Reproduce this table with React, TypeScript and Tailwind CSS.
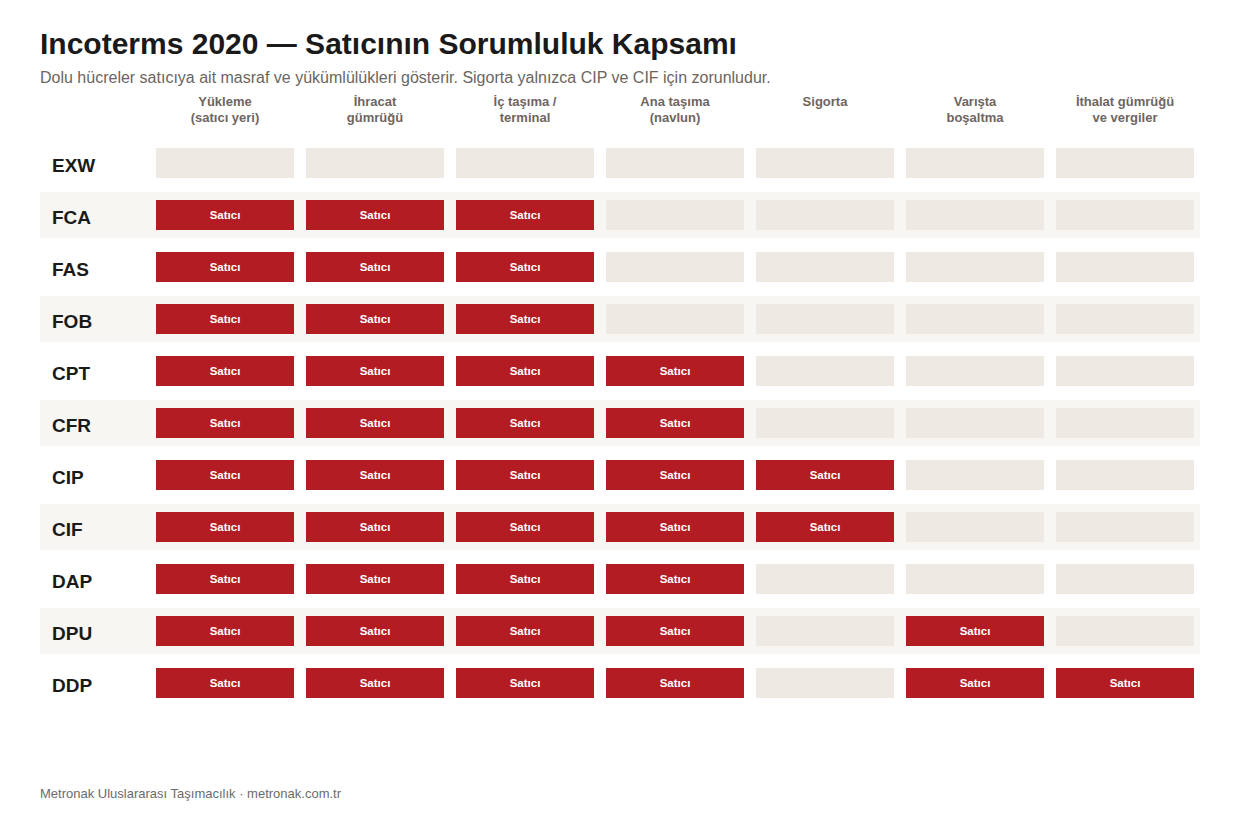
import React from "react";

const columns: string[][] = [
  ["Yükleme", "(satıcı yeri)"],
  ["İhracat", "gümrüğü"],
  ["İç taşıma /", "terminal"],
  ["Ana taşıma", "(navlun)"],
  ["Sigorta"],
  ["Varışta", "boşaltma"],
  ["İthalat gümrüğü", "ve vergiler"],
];

const rows: { term: string; seller: number[] }[] = [
  { term: "EXW", seller: [] },
  { term: "FCA", seller: [0, 1, 2] },
  { term: "FAS", seller: [0, 1, 2] },
  { term: "FOB", seller: [0, 1, 2] },
  { term: "CPT", seller: [0, 1, 2, 3] },
  { term: "CFR", seller: [0, 1, 2, 3] },
  { term: "CIP", seller: [0, 1, 2, 3, 4] },
  { term: "CIF", seller: [0, 1, 2, 3, 4] },
  { term: "DAP", seller: [0, 1, 2, 3] },
  { term: "DPU", seller: [0, 1, 2, 3, 5] },
  { term: "DDP", seller: [0, 1, 2, 3, 5, 6] },
];

export default function App() {
  return (
    <div
      className="w-[1240px] h-[820px] bg-white px-10 pt-[26px] flex flex-col"
      style={{ fontFamily: '"Liberation Sans", Arial, sans-serif' }}
    >
      <h1 className="text-[30px] leading-[36px] font-bold text-[#1a1a1a]">
        Incoterms 2020 — Satıcının Sorumluluk Kapsamı
      </h1>
      <p className="mt-[6px] text-[16px] leading-[20px] text-[#6b6560]">
        Dolu hücreler satıcıya ait masraf ve yükümlülükleri gösterir. Sigorta yalnızca CIP ve CIF için zorunludur.
      </p>
      <div className="flex flex-col gap-[6px]">
        <div className="grid grid-cols-[110px_repeat(7,150px)] pt-[6px] pb-[8px]">
          <div />
          {columns.map((c, i) => (
            <div key={i} className="text-center text-[13px] leading-[16px] font-bold text-[#6e655f]">
              {c.map((l, j) => (
                <div key={j}>{l}</div>
              ))}
            </div>
          ))}
        </div>
        {rows.map((r, ri) => (
          <div
            key={r.term}
            className={
              "grid grid-cols-[110px_repeat(7,150px)] py-[8px] " +
              (ri % 2 === 1 ? "bg-[#f8f6f2]" : "bg-white")
            }
          >
            <div className="pl-[12px] h-[30px] flex items-center text-[19px] leading-none font-bold text-[#1a1a1a] pt-[4px]">
              {r.term}
            </div>
            {columns.map((_, ci) => (
              <div key={ci} className="px-[6px]">
                {r.seller.includes(ci) ? (
                  <div className="h-[30px] bg-[#b31c23] flex items-center justify-center pt-[2px] text-white text-[11.5px] leading-none font-bold">
                    Satıcı
                  </div>
                ) : (
                  <div className="h-[30px] bg-[#eee9e3]" />
                )}
              </div>
            ))}
          </div>
        ))}
      </div>
      <div className="mt-auto pb-[19px] text-[13px] leading-[15px] text-[#6b6b6b]">
        Metronak Uluslararası Taşımacılık · metronak.com.tr
      </div>
    </div>
  );
}
